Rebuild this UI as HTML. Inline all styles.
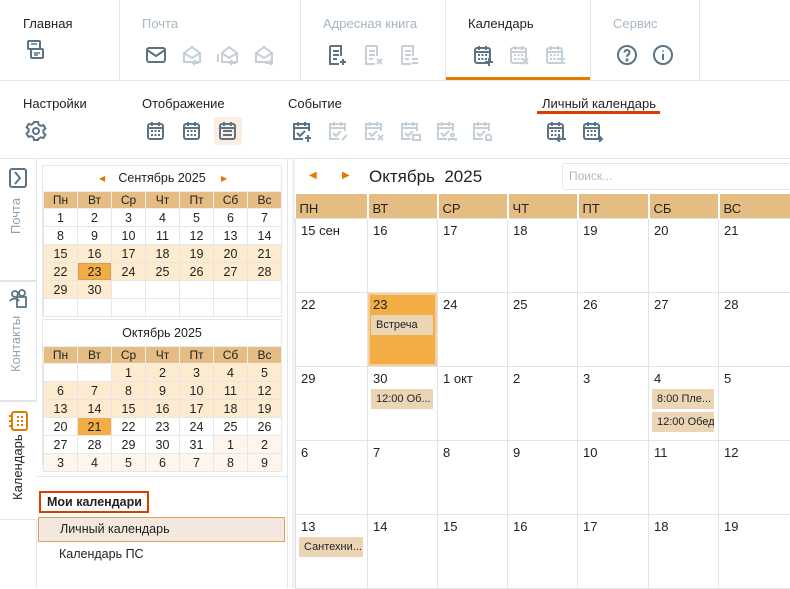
<!DOCTYPE html>
<html><head><meta charset="utf-8"><style>
*{box-sizing:border-box;margin:0;padding:0}
body{width:790px;height:588px;overflow:hidden;background:#fff;font-family:"Liberation Sans","DejaVu Sans",sans-serif;color:#222;position:relative;font-size:13px}
.a{position:absolute}
.lbl{font-size:13px;color:#222}
.dis{color:#a9b6c0}
.vl{position:absolute;width:1px;background:#e1e6ea}
svg.i{position:absolute;width:22px;height:22px}
table{border-collapse:collapse;table-layout:fixed}
.mini td{border:1px solid #e6e6e6;text-align:center;font-size:12.5px;height:18px;padding:0}
.mini th{background:#e5bc82;border:1px solid #eee;font-weight:normal;font-size:12px;height:17px}
.o{background:#fdebd0}.l{background:#fef6ec}.s{background:#f2ae45}
.big td{border:1px solid #e4e4e4;vertical-align:top;padding:4px 0 0 5px;font-size:13px;height:74px}
.big th{background:#e5bc82;text-align:left;font-weight:normal;font-size:13px;padding:6px 0 0 4px;height:24px;border-left:2px solid #fff}
.ev{background:#ebd5b5;font-size:11px;height:20px;line-height:20px;padding-left:5px;margin:3px 4px 0 -2px;white-space:nowrap;overflow:hidden}
</style></head><body>
<svg width="0" height="0" style="position:absolute">
<defs>
<g id="cal" fill="none" stroke-width="2"><rect x="3" y="4" width="15" height="15" rx="2"/><path d="M3 8h15M7 2v4M14 2v4"/><g stroke="none" fill="currentColor"><rect x="6" y="10" width="2" height="2"/><rect x="9.5" y="10" width="2" height="2"/><rect x="13" y="10" width="2" height="2"/><rect x="6" y="14" width="2" height="2"/><rect x="9.5" y="14" width="2" height="2"/><rect x="13" y="14" width="2" height="2"/></g></g>
</defs></svg>

<!-- top row -->
<div class="a" style="left:0;top:80px;width:790px;height:1px;background:#e1e6ea"></div>
<div class="vl" style="left:119px;top:0;height:80px"></div>
<div class="vl" style="left:300px;top:0;height:80px"></div>
<div class="vl" style="left:445px;top:0;height:80px"></div>
<div class="vl" style="left:590px;top:0;height:80px"></div>
<div class="vl" style="left:699px;top:0;height:80px"></div>
<div class="a" style="left:446px;top:77px;width:144px;height:3px;background:#e07b00"></div>

<div class="a lbl" style="left:23px;top:16px">Главная</div>
<svg class="i" style="left:25px;top:39px" viewBox="0 0 22 22" fill="none" stroke="#5b7384" stroke-width="2"><rect x="3" y="2" width="12" height="8" rx="1"/><rect x="6" y="10" width="12" height="9" rx="1"/><path d="M9 14h6M9 16h4M6 5h6" stroke-width="1.5"/></svg>

<div class="a lbl dis" style="left:142px;top:16px">Почта</div>
<svg class="i" style="left:145px;top:44px" viewBox="0 0 22 22" fill="none" stroke="#5b7384" stroke-width="2"><rect x="2" y="4" width="18" height="14" rx="2"/><path d="M2 6l9 6 9-6"/></svg>
<svg class="i" style="left:181px;top:44px" viewBox="0 0 22 22" fill="none" stroke="#c5cfd6" stroke-width="2"><path d="M3 9l8-6 8 6v9H3z M3 9l8 5 8-5M12 19h6M14 16l-2 3 2 2"/></svg>
<svg class="i" style="left:217px;top:44px" viewBox="0 0 22 22" fill="none" stroke="#c5cfd6" stroke-width="2"><path d="M5 9l7-6 8 6v9H5z M1 10v8M5 9l7 5 8-5M13 19h6M15 16l-2 3 2 2"/></svg>
<svg class="i" style="left:253px;top:44px" viewBox="0 0 22 22" fill="none" stroke="#c5cfd6" stroke-width="2"><path d="M3 9l8-6 8 6v9H3z M3 9l8 5 8-5M12 19h7M17 16l2 3-2 2"/></svg>

<div class="a lbl dis" style="left:323px;top:16px">Адресная книга</div>
<svg class="i" style="left:326px;top:44px" viewBox="0 0 22 22" fill="none" stroke="#5b7384" stroke-width="2"><path d="M4 2h11v10M4 2v18h9M7 7h6M7 11h6M7 15h4M17 15v6M14 18h6"/></svg>
<svg class="i" style="left:362px;top:44px" viewBox="0 0 22 22" fill="none" stroke="#c5cfd6" stroke-width="2"><path d="M4 2h11v10M4 2v18h9M7 7h6M7 11h6M7 15h4M15 15l5 5M20 15l-5 5"/></svg>
<svg class="i" style="left:398px;top:44px" viewBox="0 0 22 22" fill="none" stroke="#c5cfd6" stroke-width="2"><path d="M4 2h11v10M4 2v18h9M7 7h6M7 11h6M7 15h4M14 15h6M14 19h6"/></svg>

<div class="a lbl" style="left:468px;top:16px">Календарь</div>
<svg class="i" style="left:472px;top:44px;color:#5b7384" viewBox="0 0 22 22" stroke="#5b7384"><use href="#cal"/><path d="M17 14v8M13 18h8" stroke-width="2"/></svg>
<svg class="i" style="left:508px;top:44px;color:#c5cfd6" viewBox="0 0 22 22" stroke="#c5cfd6"><use href="#cal"/><path d="M15 15l5 5M20 15l-5 5" stroke-width="2"/></svg>
<svg class="i" style="left:544px;top:44px;color:#c5cfd6" viewBox="0 0 22 22" stroke="#c5cfd6"><use href="#cal"/><path d="M14 15h7M14 19h7" stroke-width="2"/></svg>

<div class="a lbl dis" style="left:613px;top:16px">Сервис</div>
<svg class="i" style="left:616px;top:44px" viewBox="0 0 22 22" fill="none" stroke="#5b7384" stroke-width="2"><circle cx="11" cy="11" r="9"/><path d="M8.5 8.5a2.5 2.5 0 1 1 3.5 2.3c-.8.4-1 1-1 2"/><circle cx="11" cy="16" r=".6"/></svg>
<svg class="i" style="left:652px;top:44px" viewBox="0 0 22 22" fill="none" stroke="#5b7384" stroke-width="2"><circle cx="11" cy="11" r="9"/><path d="M11 10v6M11 6.5v1"/></svg>

<!-- second row -->
<div class="a lbl" style="left:23px;top:96px">Настройки</div>
<svg class="i" style="left:25px;top:120px" viewBox="0 0 22 22" fill="none" stroke="#5b7384" stroke-width="2"><circle cx="11" cy="11" r="3"/><path d="M9 2h4l.6 2.6 2.3 1.3 2.5-.8 2 3.4-2 1.8v2.6l2 1.8-2 3.4-2.5-.8-2.3 1.3L13 20H9l-.6-2.6-2.3-1.3-2.5.8-2-3.4 2-1.8V9.1l-2-1.8 2-3.4 2.5.8 2.3-1.3z"/></svg>

<div class="a lbl" style="left:142px;top:96px">Отображение</div>
<svg class="i" style="left:145px;top:120px;color:#5b7384" viewBox="0 0 22 22" stroke="#5b7384"><use href="#cal"/></svg>
<svg class="i" style="left:181px;top:120px;color:#5b7384" viewBox="0 0 22 22" stroke="#5b7384"><use href="#cal"/></svg>
<div class="a" style="left:214px;top:117px;width:28px;height:28px;background:#fbeee0;border-radius:3px"></div>
<svg class="i" style="left:217px;top:120px" viewBox="0 0 22 22" fill="none" stroke="#5b7384" stroke-width="2"><rect x="3" y="4" width="15" height="15" rx="2"/><path d="M3 8h15M7 2v4M14 2v4M6 11h9M6 15h9" /></svg>

<div class="a lbl" style="left:288px;top:96px">Событие</div>
<svg class="i" style="left:291px;top:120px" viewBox="0 0 22 22" fill="none" stroke="#5b7384" stroke-width="2"><path d="M12 19H3V4h15v7M3 8h15M7 2v4M14 2v4M6 13l3 3 5-5M17 15v7M14 18h6"/></svg>
<svg class="i" style="left:327px;top:120px" viewBox="0 0 22 22" fill="none" stroke="#c5cfd6" stroke-width="2"><path d="M12 19H3V4h15v7M3 8h15M7 2v4M14 2v4M6 13l3 3 5-5M15 20l5-5"/></svg>
<svg class="i" style="left:363px;top:120px" viewBox="0 0 22 22" fill="none" stroke="#c5cfd6" stroke-width="2"><path d="M12 19H3V4h15v7M3 8h15M7 2v4M14 2v4M6 13l3 3 5-5M15 15l5 5M20 15l-5 5"/></svg>
<svg class="i" style="left:399px;top:120px" viewBox="0 0 22 22" fill="none" stroke="#c5cfd6" stroke-width="2"><path d="M12 19H3V4h15v7M3 8h15M7 2v4M14 2v4M6 13l3 3 5-5"/><rect x="14" y="15" width="7" height="5"/></svg>
<svg class="i" style="left:435px;top:120px" viewBox="0 0 22 22" fill="none" stroke="#c5cfd6" stroke-width="2"><path d="M12 19H3V4h15v7M3 8h15M7 2v4M14 2v4M6 13l3 3 5-5M14 21v-2h7v2"/><circle cx="17.5" cy="15" r="1.5"/></svg>
<svg class="i" style="left:471px;top:120px" viewBox="0 0 22 22" fill="none" stroke="#c5cfd6" stroke-width="2"><path d="M12 19H3V4h15v7M3 8h15M7 2v4M14 2v4M6 13l3 3 5-5M14 20h7M15 20v-3a2.5 2.5 0 0 1 5 0v3"/></svg>

<div class="a lbl" style="left:542px;top:96px">Личный календарь</div>
<div class="a" style="left:537px;top:111px;width:123px;height:3px;background:#e03c00"></div>
<svg class="i" style="left:545px;top:120px;color:#5b7384" viewBox="0 0 22 22" stroke="#5b7384"><use href="#cal"/><path d="M13 19h8M15 16l-3 3 3 3" stroke-width="2" fill="none"/></svg>
<svg class="i" style="left:581px;top:120px;color:#5b7384" viewBox="0 0 22 22" stroke="#5b7384"><use href="#cal"/><path d="M12 19h8M18 16l3 3-3 3" stroke-width="2" fill="none"/></svg>

<!-- main area -->
<div class="a" style="left:0;top:158px;width:790px;height:1px;background:#e1e6ea"></div>
<div class="vl" style="left:36px;top:159px;height:429px"></div>
<div class="vl" style="left:287px;top:159px;height:429px"></div>
<div class="a" style="left:0;top:280px;width:36px;height:2px;background:#e1e6ea"></div>
<div class="a" style="left:0;top:400px;width:36px;height:2px;background:#e1e6ea"></div>
<div class="a" style="left:0;top:519px;width:36px;height:1px;background:#e1e6ea"></div>
<div class="a" style="left:36px;top:402px;width:2px;height:117px;background:#fff"></div>

<svg class="a" style="left:8px;top:167px;width:20px;height:22px" viewBox="0 0 20 22" fill="none" stroke="#5b7384" stroke-width="2"><rect x="2" y="2" width="16" height="18" rx="2"/><path d="M7 5l5 6-5 6"/></svg>
<div class="a" style="left:8px;top:234px;transform:rotate(-90deg);transform-origin:0 0;color:#8fa2b2;font-size:13px;white-space:nowrap">Почта</div>
<svg class="a" style="left:7px;top:287px;width:22px;height:22px" viewBox="0 0 22 22" fill="none" stroke="#5b7384" stroke-width="1.8"><circle cx="8" cy="7" r="3"/><circle cx="15" cy="6" r="3"/><path d="M3 14a5 4 0 0 1 9 0M10 10h9v10h-9z"/></svg>
<div class="a" style="left:8px;top:372px;transform:rotate(-90deg);transform-origin:0 0;color:#8fa2b2;font-size:13px;white-space:nowrap">Контакты</div>
<svg class="a" style="left:8px;top:410px;width:22px;height:22px" viewBox="0 0 22 22" fill="none" stroke="#e07b00" stroke-width="2"><rect x="4" y="2" width="15" height="18" rx="2"/><path d="M1 6h4M1 11h4M1 16h4"/><g fill="#e07b00" stroke="none"><rect x="9" y="6" width="2" height="2"/><rect x="13" y="6" width="2" height="2"/><rect x="9" y="10" width="2" height="2"/><rect x="13" y="10" width="2" height="2"/><rect x="9" y="14" width="2" height="2"/><rect x="13" y="14" width="2" height="2"/></g></svg>
<div class="a" style="left:10px;top:500px;transform:rotate(-90deg);transform-origin:0 0;color:#222;font-size:13px;white-space:nowrap">Календарь</div>

<!-- mini Sep -->
<div class="a" style="left:42px;top:165px;width:240px;height:152px;border:1px solid #e6e6e6">
<div style="height:25px;line-height:25px;text-align:center;font-size:12.5px;position:relative">Сентябрь 2025<span style="position:absolute;left:56px;color:#e07b00;font-size:8px">◀</span><span style="position:absolute;left:178px;color:#e07b00;font-size:8px">▶</span></div>
<table class="mini" style="width:239px"><tr><th>Пн</th><th>Вт</th><th>Ср</th><th>Чт</th><th>Пт</th><th>Сб</th><th>Вс</th></tr>
<tr><td>1</td><td>2</td><td>3</td><td>4</td><td>5</td><td>6</td><td>7</td></tr>
<tr><td>8</td><td>9</td><td>10</td><td>11</td><td>12</td><td>13</td><td>14</td></tr>
<tr class="o"><td>15</td><td>16</td><td>17</td><td>18</td><td>19</td><td>20</td><td>21</td></tr>
<tr class="o"><td>22</td><td class="s" style="box-shadow:inset 0 0 0 1px #d9a055">23</td><td>24</td><td>25</td><td>26</td><td>27</td><td>28</td></tr>
<tr><td class="o">29</td><td class="o">30</td><td></td><td></td><td></td><td></td><td></td></tr>
<tr><td></td><td></td><td></td><td></td><td></td><td></td><td></td></tr></table></div>

<!-- mini Oct -->
<div class="a" style="left:42px;top:319px;width:240px;height:146px;border:1px solid #e6e6e6">
<div style="height:26px;line-height:26px;text-align:center;font-size:12.5px">Октябрь 2025</div>
<table class="mini" style="width:239px"><tr><th>Пн</th><th>Вт</th><th>Ср</th><th>Чт</th><th>Пт</th><th>Сб</th><th>Вс</th></tr>
<tr><td></td><td></td><td class="o">1</td><td class="o">2</td><td class="o">3</td><td class="o">4</td><td class="o">5</td></tr>
<tr class="o"><td>6</td><td>7</td><td>8</td><td>9</td><td>10</td><td>11</td><td>12</td></tr>
<tr class="o"><td>13</td><td>14</td><td>15</td><td>16</td><td>17</td><td>18</td><td>19</td></tr>
<tr><td>20</td><td class="s">21</td><td>22</td><td>23</td><td>24</td><td>25</td><td>26</td></tr>
<tr><td>27</td><td>28</td><td>29</td><td>30</td><td>31</td><td class="l">1</td><td class="l">2</td></tr>
<tr class="l"><td>3</td><td>4</td><td>5</td><td>6</td><td>7</td><td>8</td><td>9</td></tr></table></div>
<div class="a" style="left:37px;top:476px;width:250px;height:1px;background:#e1e6ea"></div>

<div class="a" style="left:39px;top:491px;height:22px;border:2px solid #e03c00;font-weight:bold;font-size:12.5px;line-height:18px;padding:0 5px 0 6px;white-space:nowrap">Мои календари</div>
<div class="a" style="left:38px;top:517px;width:247px;height:25px;background:#f3e8df;border:1px solid #e8a050;font-size:12.5px;line-height:23px;padding-left:21px">Личный календарь</div>
<div class="a" style="left:59px;top:547px;font-size:12.5px">Календарь ПС</div>

<!-- big calendar -->
<div class="a" style="left:292px;top:159px;width:3px;height:429px;background:#eef0f2"></div>
<div class="a" style="left:295px;top:159px;width:495px;height:35px">
<span class="a" style="left:14px;top:11px;color:#e07b00;font-size:10px">◀</span>
<span class="a" style="left:47px;top:11px;color:#e07b00;font-size:10px">▶</span>
<span class="a" style="left:74px;top:8px;font-size:17px">Октябрь&nbsp; 2025</span>
<div class="a" style="left:267px;top:4px;width:240px;height:27px;border:1px solid #e1e6ea;border-radius:3px;color:#b0b8bf;font-size:12px;line-height:25px;padding-left:6px">Поиск...</div>
</div>
<table class="big a" style="left:295px;top:194px;width:497px">
<colgroup><col style="width:72px"><col style="width:70px"><col style="width:70px"><col style="width:70px"><col style="width:71px"><col style="width:70px"><col style="width:74px"></colgroup>
<tr><th style="border-left:0">ПН</th><th>ВТ</th><th>СР</th><th>ЧТ</th><th>ПТ</th><th>СБ</th><th>ВС</th></tr>
<tr><td>15 сен</td><td>16</td><td>17</td><td>18</td><td>19</td><td>20</td><td>21</td></tr>
<tr><td>22</td><td style="background:#f2ae45;box-shadow:inset 0 0 0 2px #f5cf9a">23<div class="ev">Встреча</div></td><td>24</td><td>25</td><td>26</td><td>27</td><td>28</td></tr>
<tr><td>29</td><td>30<div class="ev">12:00 Об...</div></td><td>1 окт</td><td>2</td><td>3</td><td>4<div class="ev">8:00 Пле...</div><div class="ev">12:00 Обед</div></td><td>5</td></tr>
<tr><td>6</td><td>7</td><td>8</td><td>9</td><td>10</td><td>11</td><td>12</td></tr>
<tr><td>13<div class="ev">Сантехни...</div></td><td>14</td><td>15</td><td>16</td><td>17</td><td>18</td><td>19</td></tr>
</table>
</body></html>
